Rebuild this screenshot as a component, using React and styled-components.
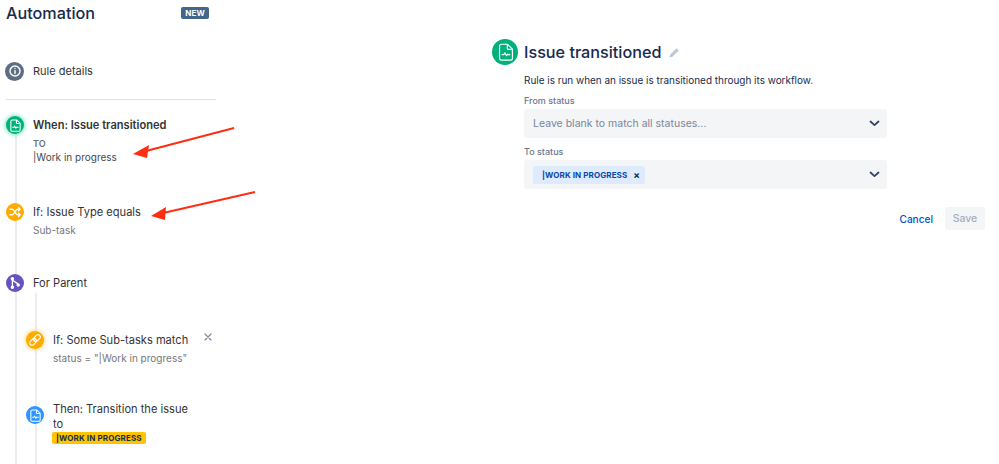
import React from 'react';
import styled, { createGlobalStyle } from 'styled-components';

const GlobalStyle = createGlobalStyle`
	html, body {
		margin: 0;
		background: #fff;
	}
	body {
		font-family: Inter, "Liberation Sans", sans-serif;
		overflow: hidden;
	}
`

const FileIcon = () => <svg width="13" height="13" viewBox="0 0 14 14" fill="none" stroke="#fff" strokeWidth="1.1" strokeLinejoin="round">
	<path d="M3.5 1h4.7L12 4.8v7a1.5 1.5 0 0 1-1.5 1.5h-7A1.5 1.5 0 0 1 2 11.8v-9.3A1.5 1.5 0 0 1 3.5 1z" />
	<path d="M8 1v3.2a.7.7 0 0 0 .7.7H12" />
	<path d="M4 9h1.2l.9-1.3 1.3 2.2.9-1.3 .2.4H10" strokeLinecap="round" />
</svg>

const BigFileIcon = () => <svg width="18" height="18" viewBox="0 0 14 14" fill="none" stroke="#fff" strokeWidth="0.9" strokeLinejoin="round">
	<path d="M3.5 1h4.7L12 4.8v7a1.5 1.5 0 0 1-1.5 1.5h-7A1.5 1.5 0 0 1 2 11.8v-9.3A1.5 1.5 0 0 1 3.5 1z" />
	<path d="M8 1v3.2a.7.7 0 0 0 .7.7H12" />
	<path d="M4 9h1.2l.9-1.3 1.3 2.2.9-1.3 .2.4H10" strokeLinecap="round" />
</svg>

const InfoIcon = () => <svg width="12" height="12" viewBox="0 0 12 12" fill="none" stroke="#fff" strokeWidth="1.4" strokeLinecap="round">
	<circle cx="6" cy="6" r="5" />
	<path d="M6 3.5v.1" />
	<path d="M6 5.6v3" />
</svg>

const ShuffleIcon = () => <svg width="12" height="12" viewBox="0 0 12 12" fill="none" stroke="#fff" strokeWidth="1.4" strokeLinecap="round" strokeLinejoin="round">
	<path d="M1 3.2h2c2.6 0 3.2 5.6 5.8 5.6H11" />
	<path d="M1 8.8h2c2.6 0 3.2-5.6 5.8-5.6H11" />
	<path d="M9.5 1.6 11 3.2 9.5 4.8" />
	<path d="M9.5 7.2 11 8.8l-1.5 1.6" />
</svg>

const BranchIcon = () => <svg width="12" height="14" viewBox="0 0 12 14" fill="#fff" stroke="#fff" strokeWidth="1.3" strokeLinecap="round">
	<circle cx="3.4" cy="2.8" r="1.1" />
	<circle cx="3.4" cy="11.2" r="1.1" />
	<circle cx="9.2" cy="9" r="1.1" />
	<path d="M3.4 3v8" fill="none" />
	<path d="M3.4 3.4c.6 3 4.6 1.8 5.8 5.4" fill="none" />
</svg>

const LinkIcon = () => <svg width="14" height="14" viewBox="0 0 14 14" fill="none" stroke="#fff" strokeWidth="1.2">
	<g transform="rotate(-45 7 7)">
		<rect x="0.5" y="4.7" width="7.5" height="4.6" rx="2.3" />
		<rect x="6" y="4.7" width="7.5" height="4.6" rx="2.3" />
	</g>
</svg>

const Chevron = () => <svg width="11" height="7" viewBox="0 0 11 7" fill="none" stroke="#344563" strokeWidth="1.8" strokeLinecap="round" strokeLinejoin="round">
	<path d="M1.5 1.5l4 3.6 4-3.6" />
</svg>

const PencilIcon = () => <svg width="11" height="11" viewBox="0 0 11 11" fill="#c1c7d0">
	<path d="M0.5 10.5l.7-3L7.5 1.2l2.3 2.3L3.5 9.8z" />
</svg>

const CloseIcon = () => <svg width="8" height="8" viewBox="0 0 8 8" fill="none" stroke="#7a869a" strokeWidth="1.2" strokeLinecap="round">
	<path d="M1 1l6 6M7 1l-6 6" />
</svg>

const App = () => {
	return <Page>
		<GlobalStyle />
		<Sidebar>
			<Header>
				<Title>Automation</Title>
				<NewLozenge>NEW</NewLozenge>
			</Header>
			<DetailsRow>
				<Badge $color="#5e6c84" $size={19}><InfoIcon /></Badge>
				<DetailsLabel>Rule details</DetailsLabel>
			</DetailsRow>
			<Divider />
			<Steps>
				<Step $height={87}>
					<Badge $color="#00b27a" $glow="#79e2c0"><FileIcon /></Badge>
					<StepBody>
						<StepTitle $bold>When: Issue transitioned</StepTitle>
						<SmallCaps>TO</SmallCaps>
						<StepSub $dark>|Work in progress</StepSub>
					</StepBody>
				</Step>
				<Step $height={71}>
					<Badge $color="#ffab00"><ShuffleIcon /></Badge>
					<StepBody>
						<StepTitle>If: Issue Type equals</StepTitle>
						<StepSub $spaced>Sub-task</StepSub>
					</StepBody>
				</Step>
				<Step $height={25}>
					<Badge $color="#6554c0"><BranchIcon /></Badge>
					<StepBody>
						<StepTitle>For Parent</StepTitle>
					</StepBody>
				</Step>
				<Nested>
					<Step $height={75}>
						<Badge $color="#ffab00" $glow="#ffd98a"><LinkIcon /></Badge>
						<StepBody>
							<StepTitle>If: Some Sub-tasks match</StepTitle>
							<StepSub $spaced>status = "|Work in progress"</StepSub>
						</StepBody>
						<Remove><CloseIcon /></Remove>
					</Step>
					<Step>
						<Badge $color="#2e94ff"><FileIcon /></Badge>
						<StepBody $lift>
							<StepTitle $narrow>Then: Transition the issue to</StepTitle>
							<YellowTag>|WORK IN PROGRESS</YellowTag>
						</StepBody>
					</Step>
				</Nested>
			</Steps>
		</Sidebar>
		<Panel>
			<PanelHeader>
				<Badge $color="#00b27a" $size={26}><BigFileIcon /></Badge>
				<PanelTitle>Issue transitioned</PanelTitle>
				<PencilIcon />
			</PanelHeader>
			<Form>
				<Description>Rule is run when an issue is transitioned through its workflow.</Description>
				<FieldLabel>From status</FieldLabel>
				<Select>
					<Placeholder>Leave blank to match all statuses...</Placeholder>
					<Chevron />
				</Select>
				<FieldLabel>To status</FieldLabel>
				<Select>
					<BlueTag>|WORK IN PROGRESS<TagClose>×</TagClose></BlueTag>
					<Chevron />
				</Select>
				<Actions>
					<Cancel>Cancel</Cancel>
					<Save>Save</Save>
				</Actions>
			</Form>
		</Panel>
		<Arrows viewBox="0 0 999 464">
			<path d="M234 128 146 151" stroke="#ff2d12" strokeWidth="2" />
			<path d="M133 154 149 145 147 158z" fill="#ff2d12" />
			<path d="M255 192 163 213" stroke="#ff2d12" strokeWidth="2" />
			<path d="M151 216 166 207 165 220z" fill="#ff2d12" />
		</Arrows>
	</Page>
}

const Page = styled.div`
	position: relative;
	width: 999px;
	height: 464px;
	overflow: hidden;
	display: flex;
	background: #fff;
`
const Sidebar = styled.div`
	width: 210px;
	margin-left: 6px;
	flex-shrink: 0;
`
const Header = styled.div`
	display: flex;
	justify-content: space-between;
	align-items: center;
	height: 26px;
	padding-right: 7px;
`
const Title = styled.h1`
	margin: 0;
	font-size: 16.2px;
	font-weight: 500;
	color: #172b4d;
`
const NewLozenge = styled.span`
	background: #42668c;
	color: #fff;
	font-size: 8px;
	font-weight: 700;
	letter-spacing: 0.2px;
	padding: 1px 4px;
	border-radius: 2px;
	margin-top: -1px;
`
const DetailsRow = styled.div`
	display: flex;
	align-items: center;
	gap: 9px;
	margin: 35px 0 0 -1px;
	height: 20px;
`
const DetailsLabel = styled.span`
	font-size: 11px;
	color: #333;
`
const Divider = styled.div`
	height: 1px;
	background: #dfe1e6;
	margin-top: 18px;
`
const Steps = styled.div`
	position: relative;
	margin-top: 16px;
	&::before {
		content: '';
		position: absolute;
		left: 9px;
		top: 8px;
		bottom: -100px;
		width: 2px;
		background: #ebecf0;
	}
`
const Step = styled.div`
	position: relative;
	display: flex;
	gap: 9px;
	height: ${props => props.$height ? props.$height + 'px' : 'auto'};
`
const Badge = styled.div`
	position: relative;
	flex-shrink: 0;
	width: ${props => props.$size || 18}px;
	height: ${props => props.$size || 18}px;
	border-radius: 50%;
	background: ${props => props.$color};
	display: flex;
	align-items: center;
	justify-content: center;
	box-shadow: ${props => props.$glow ? `0 0 4px 1px ${props.$glow}` : 'none'};
`
const StepBody = styled.div`
	min-width: 0;
	padding-top: 1px;
	margin-top: ${props => props.$lift ? '-5px' : '0'};
`
const StepTitle = styled.div`
	font-size: 11.1px;
	font-weight: ${props => props.$bold ? 600 : 400};
	color: #333;
	width: ${props => props.$narrow ? '140px' : 'auto'};
	line-height: ${props => props.$narrow ? '15px' : '16px'};
`
const SmallCaps = styled.div`
	font-size: 9px;
	font-weight: 600;
	color: #6b6f76;
	margin-top: 5px;
	line-height: 12px;
`
const StepSub = styled.div`
	font-size: 10px;
	line-height: 14px;
	color: ${props => props.$dark ? '#45484d' : '#75777b'};
	margin-top: ${props => props.$spaced ? '3px' : '0'};
`
const Nested = styled.div`
	position: relative;
	margin-left: 20px;
	padding-top: 32px;
	&::before {
		content: '';
		position: absolute;
		left: 9px;
		top: -6px;
		bottom: -100px;
		width: 2px;
		background: #ebecf0;
	}
`
const Remove = styled.span`
	position: absolute;
	left: 178px;
	top: 2px;
	display: flex;
`
const YellowTag = styled.div`
	width: fit-content;
	margin-left: -1px;
	background: #ffc400;
	color: #172b4d;
	font-size: 8px;
	font-weight: 700;
	letter-spacing: 0.12px;
	line-height: 12px;
	padding: 0 4px;
	border-radius: 2px;
	white-space: nowrap;
`
const Panel = styled.div`
	margin-left: 276px;
	padding-top: 39px;
	width: 495px;
	flex-shrink: 0;
`
const PanelHeader = styled.div`
	display: flex;
	align-items: center;
	gap: 6px;
	svg:last-child { margin-left: 2px; }
`
const PanelTitle = styled.h2`
	margin: 0;
	font-size: 16.2px;
	font-weight: 500;
	color: #172b4d;
`
const Form = styled.div`
	margin-left: 32px;
	margin-top: 8px;
	width: 363px;
`
const Description = styled.div`
	font-size: 9.95px;
	line-height: 14px;
	color: #172b4d;
`
const FieldLabel = styled.div`
	font-size: 9px;
	font-weight: 500;
	line-height: 12px;
	color: #6b778c;
	margin-top: 8px;
	margin-bottom: 2px;
`
const Select = styled.div`
	height: 29px;
	background: #f4f5f7;
	border-radius: 3px;
	display: flex;
	align-items: center;
	justify-content: space-between;
	padding: 0 7px 0 9px;
`
const Placeholder = styled.span`
	font-size: 10.5px;
	color: #7a869a;
`
const BlueTag = styled.span`
	display: inline-flex;
	align-items: center;
	height: 18px;
	padding: 0 5px 0 9px;
	background: #deebff;
	border-radius: 2px;
	font-size: 8px;
	font-weight: 700;
	letter-spacing: 0.1px;
	color: #0747a6;
`
const TagClose = styled.span`
	margin-left: 6px;
	font-size: 10px;
	color: #172b4d;
`
const Actions = styled.div`
	display: flex;
	justify-content: flex-end;
	align-items: center;
	gap: 12px;
	margin-top: 18px;
	margin-right: -98px;
`
const Cancel = styled.span`
	font-size: 10.1px;
	font-weight: 500;
	color: #0052cc;
`
const Save = styled.span`
	width: 40px;
	height: 23px;
	background: #f4f5f7;
	border-radius: 3px;
	display: flex;
	align-items: center;
	justify-content: center;
	font-size: 10.5px;
	font-weight: 500;
	color: #a5adba;
`
const Arrows = styled.svg`
	position: absolute;
	left: 0;
	top: 0;
	width: 999px;
	height: 464px;
	pointer-events: none;
`

export default App;
